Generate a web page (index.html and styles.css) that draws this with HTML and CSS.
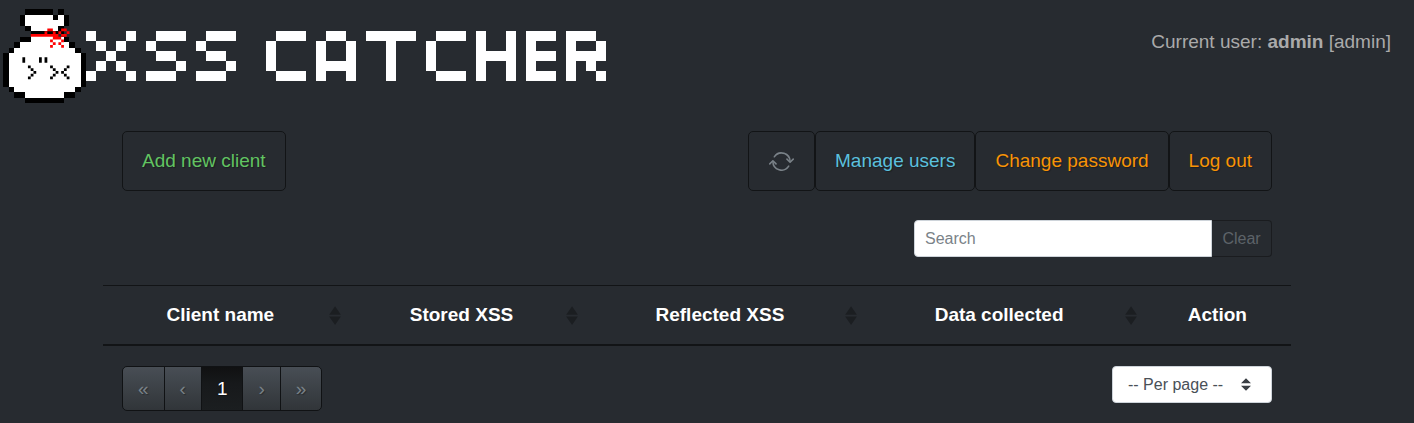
FILE: index.html
```html
<!DOCTYPE html>
<html lang="en">
<head>
<meta charset="utf-8">
<title>XSS Catcher</title>
<link rel="stylesheet" href="styles.css">
</head>
<body>
<header class="header">
  <svg class="logo" viewBox="0 0 612 108" role="img" aria-label="XSS Catcher" shape-rendering="crispEdges">
    <g transform="translate(3 9) scale(2.77)">
      <path fill="#fff" d="M8 2h10v2h2v-2h2v4h-2v4h2v2h2v2h2v2h2v12h-2v2h-4v2H8v-2H4v-2H2V16h2v-2h2v-2h4V6H8z"/>
      <path fill="#000" d="M8 0h10v2H8zM20 0h2v2h-2zM6 2h2v4H6zM18 2h2v2h-2zM22 2h2v4h-2zM8 6h2v2H8zM20 6h2v2h-2zM10 8h12v1H10zM6 10h4v2H6zM22 10h2v2h-2zM4 12h2v2H4zM24 12h2v2h-2zM2 14h2v2H2zM26 14h2v2h-2zM0 16h2v12H0zM28 16h2v12h-2zM2 28h2v2H2zM26 28h2v2h-2zM4 30h4v2H4zM22 30h4v2h-4zM8 32h14v2H8z"/>
      <g shape-rendering="geometricPrecision">
        <path fill="#f00" d="M10 9h10v1H10zM16 7h2v1h-2zM15 8h1v1h-1zM18 8h1v1h-1zM21 7h2v1h-2zM20 8h1v1h-1zM23 8h1v1h-1zM21 9h2v1h-2zM18 10h1v1h-1zM20 10h1v1h-1zM17 11h1v1h-1zM19 10h1v1h-1zM21 11h1v1h-1zM18 12h1v1h-1zM17 13h1v1h-1zM20 12h1v1h-1zM21 13h1v1h-1z"/>
        <path fill="#000" d="M7 17.4h1v2H7zM13 17.4h1v2h-1zM15 17.4h1v2h-1zM9 20.4h1v1H9zM10 21.4h1v1h-1zM11 22.4h1v1h-1zM10 23.4h1v1h-1zM9 24.4h1v1H9zM17 20.4h1v1h-1zM18 21.4h1v1h-1zM19 22.4h1v1h-1zM18 23.4h1v1h-1zM17 24.4h1v1h-1zM23 20.4h1v1h-1zM22 21.4h1v1h-1zM21 22.4h1v1h-1zM22 23.4h1v1h-1zM23 24.4h1v1h-1z"/>
      </g>
    </g>
    <g fill="#fff">
      <rect x="86" y="31" width="10" height="10"/><rect x="126" y="31" width="10" height="10"/><rect x="96" y="41" width="10" height="10"/><rect x="116" y="41" width="10" height="10"/><rect x="106" y="51" width="10" height="10"/><rect x="96" y="61" width="10" height="10"/><rect x="116" y="61" width="10" height="10"/><rect x="86" y="71" width="10" height="10"/><rect x="126" y="71" width="10" height="10"/>
      <rect x="156" y="31" width="30" height="10"/><rect x="146" y="41" width="10" height="10"/><rect x="156" y="51" width="20" height="10"/><rect x="176" y="61" width="10" height="10"/><rect x="146" y="71" width="30" height="10"/>
      <rect x="206" y="31" width="30" height="10"/><rect x="196" y="41" width="10" height="10"/><rect x="206" y="51" width="20" height="10"/><rect x="226" y="61" width="10" height="10"/><rect x="196" y="71" width="30" height="10"/>
      <rect x="276" y="31" width="30" height="10"/><rect x="266" y="41" width="10" height="30"/><rect x="276" y="71" width="30" height="10"/>
      <rect x="326" y="31" width="20" height="10"/><rect x="316" y="41" width="10" height="40"/><rect x="346" y="41" width="10" height="40"/><rect x="326" y="61" width="20" height="10"/>
      <rect x="366" y="31" width="50" height="10"/><rect x="386" y="41" width="10" height="40"/>
      <rect x="436" y="31" width="30" height="10"/><rect x="426" y="41" width="10" height="30"/><rect x="436" y="71" width="30" height="10"/>
      <rect x="476" y="31" width="10" height="50"/><rect x="506" y="31" width="10" height="50"/><rect x="486" y="51" width="20" height="10"/>
      <rect x="526" y="31" width="10" height="50"/><rect x="536" y="31" width="20" height="10"/><rect x="536" y="51" width="20" height="10"/><rect x="536" y="71" width="20" height="10"/>
      <rect x="566" y="31" width="10" height="50"/><rect x="576" y="31" width="20" height="10"/><rect x="596" y="41" width="10" height="20"/><rect x="576" y="51" width="20" height="10"/><rect x="586" y="61" width="10" height="10"/><rect x="596" y="71" width="10" height="10"/>
    </g>
  </svg>
  <p class="user">Current user: <b>admin</b> [admin]</p>
</header>
<main class="main">
  <div class="row">
    <button class="btn btn-success" type="button">Add new client</button>
    <div class="actions">
      <button class="btn btn-icon" type="button" aria-label="Refresh">
        <svg class="icon" viewBox="0 0 16 16" fill="currentColor" aria-hidden="true"><path d="M2.854 7.146a.5.5 0 0 0-.708 0l-2 2a.5.5 0 1 0 .708.708L2.5 8.207l1.646 1.647a.5.5 0 0 0 .708-.708l-2-2zm13-1a.5.5 0 0 0-.708 0L13.5 7.793l-1.646-1.647a.5.5 0 0 0-.708.708l2 2a.5.5 0 0 0 .708 0l2-2a.5.5 0 0 0 0-.708z"/><path d="M8 3a4.995 4.995 0 0 0-4.192 2.273.5.5 0 0 1-.837-.546A6 6 0 0 1 14 8a.5.5 0 0 1-1.001 0 5 5 0 0 0-5-5zM2.5 7.5A.5.5 0 0 1 3 8a5 5 0 0 0 9.192 2.727.5.5 0 1 1 .837.546A6 6 0 0 1 2 8a.5.5 0 0 1 .501-.5z"/></svg>
      </button>
      <button class="btn btn-info" type="button">Manage users</button>
      <button class="btn btn-warning" type="button">Change password</button>
      <button class="btn btn-warning" type="button">Log out</button>
    </div>
  </div>
  <div class="search">
    <input class="search-input" type="search" placeholder="Search" aria-label="Search">
    <button class="search-clear" type="button" disabled>Clear</button>
  </div>
  <table class="table">
    <thead>
      <tr>
        <th class="col-name sortable" scope="col">Client name</th>
        <th class="col-stored sortable" scope="col">Stored XSS</th>
        <th class="col-wide sortable" scope="col">Reflected XSS</th>
        <th class="col-wide sortable" scope="col">Data collected</th>
        <th scope="col">Action</th>
      </tr>
    </thead>
  </table>
  <div class="row footer">
    <nav class="pagination" aria-label="Pagination">
      <button class="page" type="button" disabled aria-label="First page">«</button>
      <button class="page" type="button" disabled aria-label="Previous page">‹</button>
      <button class="page page-active" type="button" aria-current="page">1</button>
      <button class="page" type="button" disabled aria-label="Next page">›</button>
      <button class="page" type="button" disabled aria-label="Last page">»</button>
    </nav>
    <select class="per-page" aria-label="Rows per page">
      <option>-- Per page --</option>
      <option>5</option>
      <option>10</option>
      <option>25</option>
    </select>
  </div>
</main>
</body>
</html>
```

FILE: styles.css
```css
*, *::before, *::after {
  box-sizing: border-box;
}

body {
  margin: 0;
  background: #272b30;
  color: #aaa;
  font-family: "Liberation Sans", Arial, sans-serif;
  font-size: 19px;
  line-height: 28px;
}

button, input, select {
  margin: 0;
  font: inherit;
}

.header {
  display: flex;
  justify-content: space-between;
  align-items: flex-start;
}

.logo {
  width: 612px;
  height: 108px;
}

.user {
  margin: 28px 23px 0 0;
}

.main {
  margin: 23px 123px 0 103px;
}

.row {
  display: flex;
  justify-content: space-between;
  align-items: flex-start;
  padding: 0 19px;
}

.actions {
  display: flex;
}

.btn {
  height: 60px;
  padding: 0 19px;
  border: 1px solid #121416;
  border-radius: 5px;
  background: transparent;
  text-shadow: 1px 1px 1px rgba(0, 0, 0, 0.3);
}

.btn-success {
  color: #62c462;
}

.btn-icon {
  padding: 0 20px;
  color: #7a8288;
}

.btn-info {
  color: #5bc0de;
}

.btn-warning {
  color: #f89406;
}

.icon {
  display: block;
  width: 25px;
  height: 25px;
}

.search {
  display: flex;
  justify-content: flex-end;
  margin: 29px 19px 28px;
  font-size: 16px;
}

.search-input {
  width: 298px;
  height: 37px;
  padding: 0 10px;
  border: 1px solid #ced4da;
  border-radius: 4px 0 0 4px;
  background: #fff;
  color: #495057;
  appearance: none;
}

.search-input::placeholder {
  color: #7a8288;
  opacity: 1;
}

.search-clear {
  width: 60px;
  padding: 0;
  border: 1px solid #1a1c1f;
  border-left: 0;
  border-radius: 0 4px 4px 0;
  background: transparent;
  color: #5d6369;
}

.table {
  width: 100%;
  table-layout: fixed;
  border-collapse: separate;
  border-spacing: 0;
  color: #fff;
}

.table th {
  height: 61px;
  padding: 0 12px;
  border-top: 1px solid #121416;
  border-bottom: 2px solid #121416;
  text-align: center;
}

.table .sortable {
  padding-right: 22px;
  background: url("data:image/svg+xml,%3Csvg xmlns='http://www.w3.org/2000/svg' viewBox='0 0 101 101' preserveAspectRatio='none'%3E%3Cpath opacity='.3' d='M51 1l25 23 24 22H1l25-22zM51 101l25-23 24-22H1l25 22z'/%3E%3C/svg%3E") no-repeat right 7px center / 12px 19px;
}

.col-name {
  width: 20.6%;
}

.col-stored {
  width: 20%;
}

.col-wide {
  width: 23.5%;
}

.footer {
  margin: 20px 0 12px;
}

.pagination {
  display: flex;
}

.page {
  height: 45px;
  margin-left: -1px;
  padding: 0 15px;
  border: 1px solid #101214;
  background: linear-gradient(#484e55, #3a3f44 60%, #313539);
  color: #7a8288;
  text-shadow: 1px 1px 1px rgba(0, 0, 0, 0.3);
}

.page:first-child {
  margin-left: 0;
  border-radius: 5px 0 0 5px;
}

.page:last-child {
  border-radius: 0 5px 5px 0;
}

.page-active {
  background: linear-gradient(#101112, #17191b 40%, #1b1e20);
  color: #fff;
}

.per-page {
  width: 160px;
  height: 37px;
  padding: 0 32px 0 15px;
  border: 1px solid #ced4da;
  border-radius: 4px;
  background: #fff url("data:image/svg+xml,%3Csvg xmlns='http://www.w3.org/2000/svg' viewBox='0 0 4 5'%3E%3Cpath fill='%233a3f44' d='M2 0L0 2h4zm0 5L0 3h4z'/%3E%3C/svg%3E") no-repeat right 20px center / 10px 13px;
  color: #495057;
  font-size: 16px;
  appearance: none;
}
```
